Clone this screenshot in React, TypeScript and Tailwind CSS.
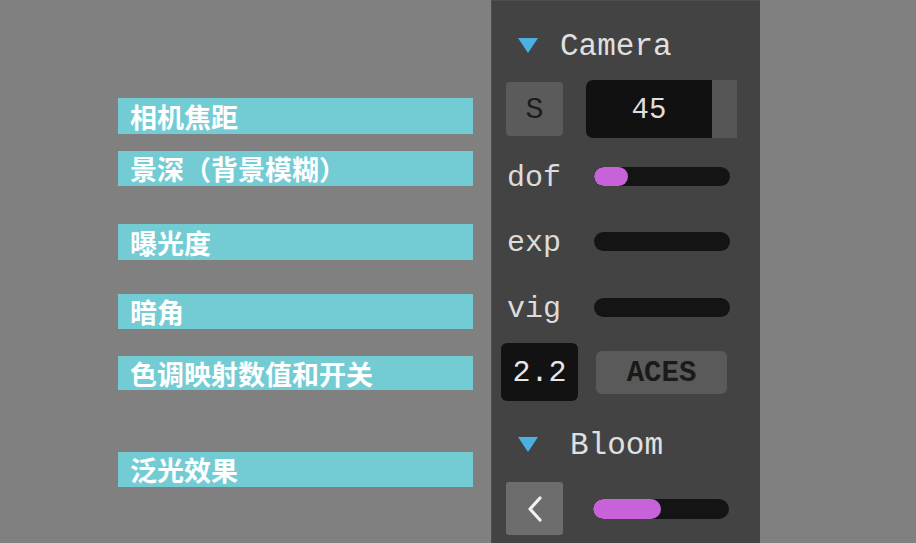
import React from "react";

const mono = { fontFamily: '"Liberation Mono", "Courier New", monospace' };
const cjk = { fontFamily: '"Noto Sans CJK SC", "Noto Sans", sans-serif' };

function Label({ className, children }: { className: string; children: React.ReactNode }) {
  return (
    <div
      className={`w-[355px] bg-[#73ccd3] flex items-center pl-[12px] text-white font-bold text-[27px] leading-none ${className}`}
      style={cjk}
    >
      {children}
    </div>
  );
}

function Tri() {
  return (
    <svg width="22" height="17" viewBox="0 0 22 17" className="shrink-0">
      <polygon points="1,1 21,1 11,16" fill="#4bb0e3" />
    </svg>
  );
}

function SliderRow({ label, fill, className }: { label: string; fill: number; className: string }) {
  return (
    <div className={`flex items-center h-[56px] ${className}`}>
      <div className="ml-[15px] w-[87px] text-[30px] leading-none text-[#dcdcdc] pt-[3px]" style={mono}>
        {label}
      </div>
      <div className="w-[136px] h-[19px] rounded-full bg-[#141414] overflow-hidden">
        {fill > 0 && <div className="h-full rounded-full bg-[#c762d8]" style={{ width: `${fill}px` }} />}
      </div>
    </div>
  );
}

export default function App() {
  return (
    <div className="flex w-[916px] h-[543px] bg-[#808080] overflow-hidden">
      <div className="ml-[118px] flex flex-col">
        <Label className="mt-[98px] h-[36px]">相机焦距</Label>
        <Label className="mt-[17px] h-[35px]">景深（背景模糊）</Label>
        <Label className="mt-[38px] h-[36px]">曝光度</Label>
        <Label className="mt-[34px] h-[35px]">暗角</Label>
        <Label className="mt-[27px] h-[34px]">色调映射数值和开关</Label>
        <Label className="mt-[62px] h-[35px]">泛光效果</Label>
      </div>

      <div className="ml-[18px] w-[269px] h-[543px] bg-[#434343] border-l border-t border-[#4e4e4e] flex flex-col">
        {/* Camera header */}
        <div className="mt-[28px] h-[32px] flex items-center">
          <div className="ml-[25px]">
            <Tri />
          </div>
          <div className="ml-[21px] text-[31px] leading-none text-[#e0e0e0] pt-[3px]" style={mono}>
            Camera
          </div>
        </div>

        {/* focal row */}
        <div className="mt-[19px] h-[58px] flex items-center">
          <div
            className="ml-[14px] w-[57px] h-[54px] rounded-[4px] bg-[#5b5b5b] flex items-center justify-center text-[30px] leading-none text-[#1c1c1c] pt-[2px]"
            style={mono}
          >
            S
          </div>
          <div className="ml-[23px] w-[126px] h-[58px] rounded-l-[7px] bg-[#111111] flex items-center justify-center text-[29px] leading-none text-[#dedede] pt-[2px]" style={mono}>
            45
          </div>
          <div className="w-[25px] h-[58px] bg-[#555555]" />
        </div>

        <SliderRow label="dof" fill={34} className="mt-[10px]" />
        <SliderRow label="exp" fill={0} className="mt-[9px]" />
        <SliderRow label="vig" fill={0} className="mt-[10px]" />

        {/* tone mapping */}
        <div className="mt-[8px] h-[58px] flex items-center">
          <div
            className="ml-[9px] w-[77px] h-[58px] rounded-[6px] bg-[#121212] flex items-center justify-center text-[30px] leading-none text-[#e6e6e6] pt-[2px]"
            style={mono}
          >
            2.2
          </div>
          <div
            className="ml-[18px] w-[131px] h-[43px] rounded-[6px] bg-[#5a5a5a] flex items-center justify-center text-[29px] leading-none text-[#1a1a1a] font-bold pt-[3px]"
            style={mono}
          >
            ACES
          </div>
        </div>

        {/* Bloom header */}
        <div className="mt-[27px] h-[32px] flex items-center">
          <div className="ml-[25px]">
            <Tri />
          </div>
          <div className="ml-[31px] text-[31px] leading-none text-[#e0e0e0] pt-[3px]" style={mono}>
            Bloom
          </div>
        </div>

        {/* bloom row */}
        <div className="mt-[22px] h-[53px] flex items-center">
          <div className="ml-[14px] w-[57px] h-[53px] rounded-[3px] bg-[#6d6d6d] flex items-center justify-center">
            <svg width="20" height="28" viewBox="0 0 20 28">
              <polyline points="15,3 5,14 15,25" fill="none" stroke="#f2f2f2" strokeWidth="3.2" strokeLinecap="round" strokeLinejoin="round" />
            </svg>
          </div>
          <div className="ml-[30px] w-[136px] h-[20px] rounded-full bg-[#141414] overflow-hidden">
            <div className="h-full rounded-full bg-[#c762d8]" style={{ width: "68px" }} />
          </div>
        </div>
      </div>
    </div>
  );
}
